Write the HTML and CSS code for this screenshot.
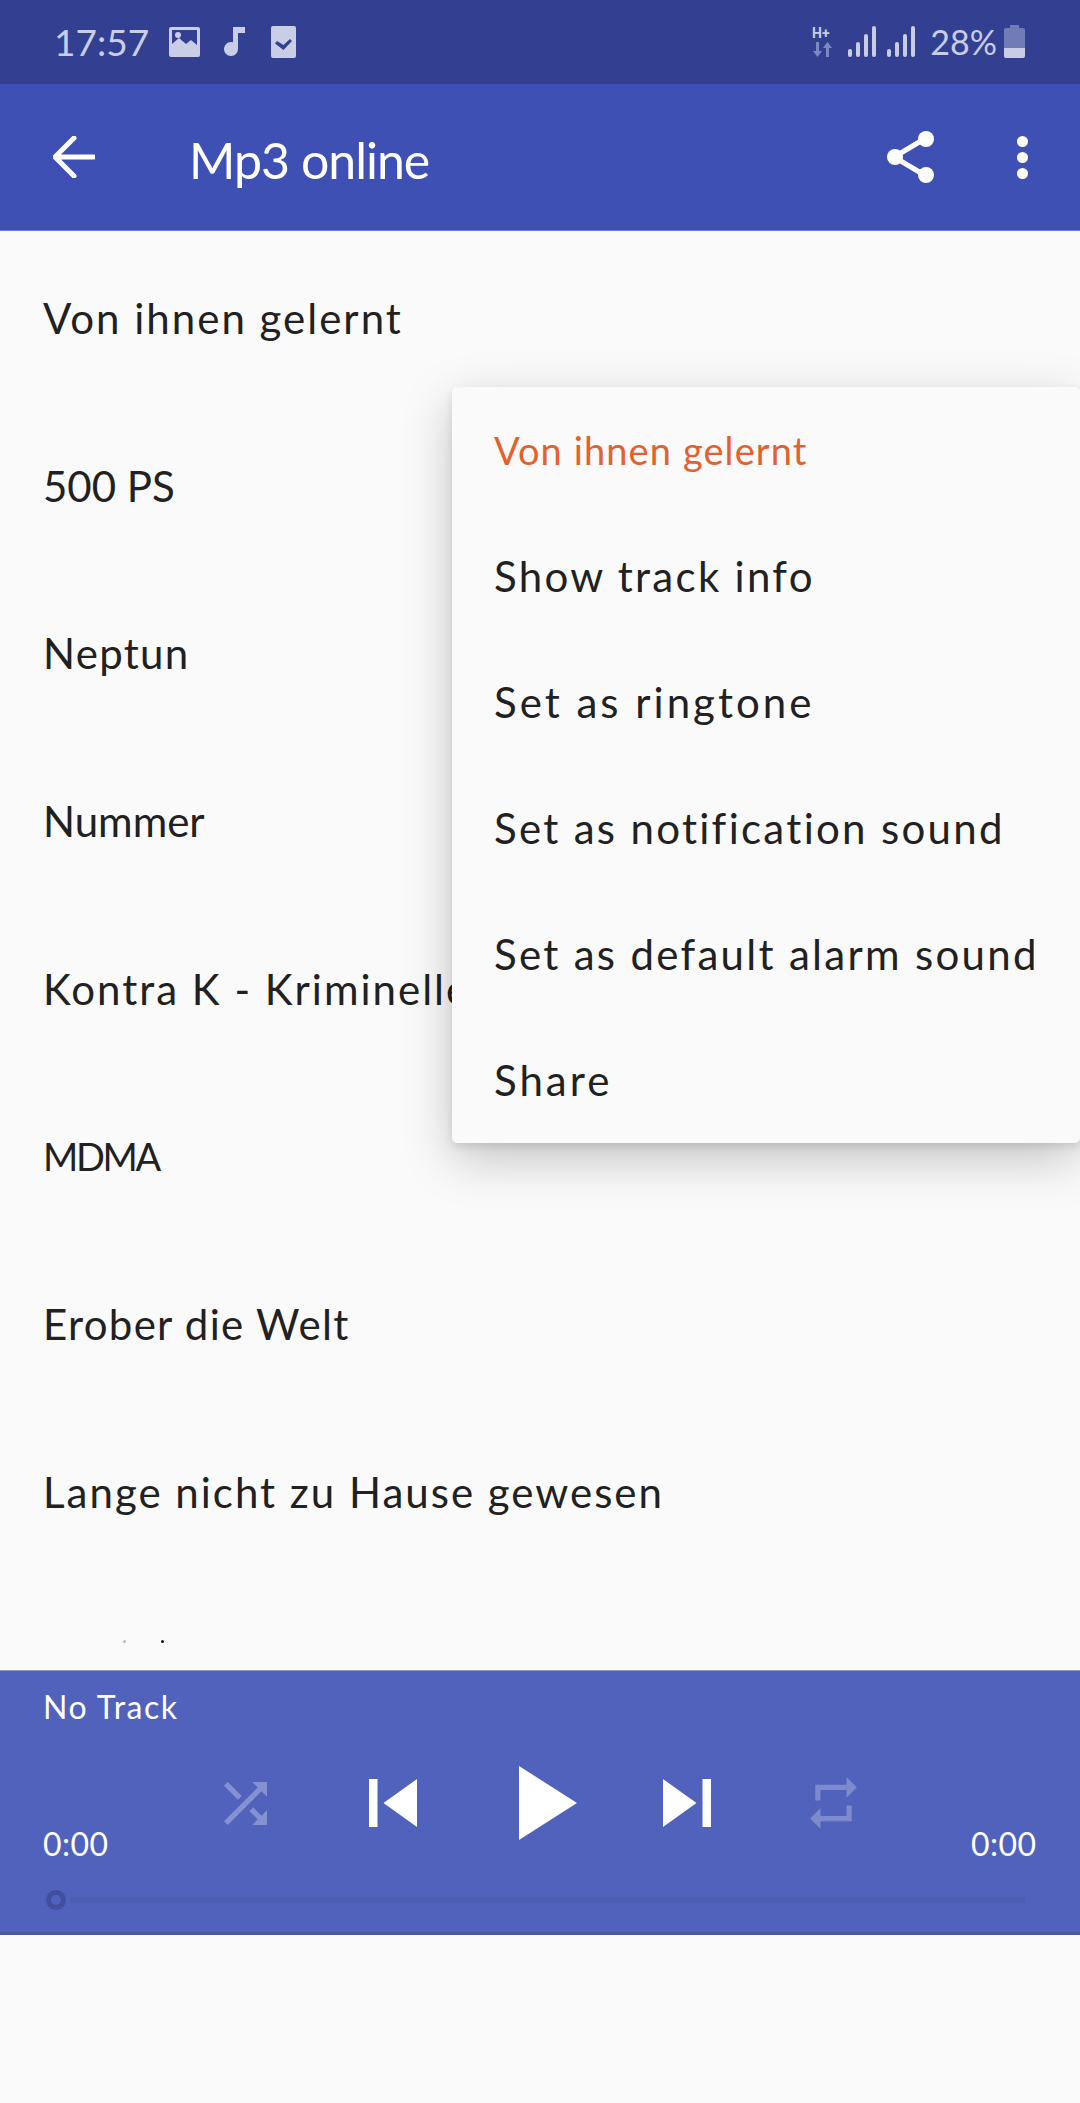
FILE: index.html
```html
<!DOCTYPE html>
<html lang="en">
<head>
<meta charset="UTF-8">
<meta name="viewport" content="width=device-width, initial-scale=1.0">
<title>Mp3 online</title>
<link rel="stylesheet" href="styles.css">
</head>
<body>
<div class="screen">
  <div class="status">
    <div class="status-left">
      <span class="clock">17:57</span>
      <svg class="st-image" viewBox="0 0 31 30"><path fill-rule="evenodd" d="M2 0h27a2 2 0 0 1 2 2v26a2 2 0 0 1-2 2H2a2 2 0 0 1-2-2V2a2 2 0 0 1 2-2zM3 3v14l7-6 7 6 5-4 6 5V3zM9 5a3 3 0 1 1 0 6 3 3 0 0 1 0-6z"/></svg>
      <svg class="st-note" viewBox="0 0 21 29"><path d="M9 0h12v6H14v16a7 7 0 1 1-5-6.700z"/></svg>
      <svg class="st-check" viewBox="0 0 25 32"><path fill-rule="evenodd" d="M2 0h21a2 2 0 0 1 2 2v28a2 2 0 0 1-2 2H2a2 2 0 0 1-2-2V2a2 2 0 0 1 2-2zM6 15l-2 2.500 8.500 6.500L21 15l-2-2-6.500 6z"/></svg>
    </div>
    <div class="status-right">
      <svg class="st-net" viewBox="0 0 23 32">
        <text x="0" y="12" class="st-net-text">H+</text>
        <path class="st-net-arrows" d="M4 16h3v9h3l-4.500 6L1 25h3zM17 31h-3v-9h-3l4.500-6 4.500 6h-3z"/>
      </svg>
      <svg class="st-signal" viewBox="0 0 28 31"><rect x="0" y="23" width="4" height="8" rx="2"/><rect x="8" y="16" width="4" height="15" rx="2"/><rect x="16" y="8" width="4" height="23" rx="2"/><rect x="24" y="0" width="4" height="31" rx="2"/></svg>
      <svg class="st-signal" viewBox="0 0 28 31"><rect x="0" y="23" width="4" height="8" rx="2"/><rect x="8" y="16" width="4" height="15" rx="2"/><rect x="16" y="8" width="4" height="23" rx="2"/><rect x="24" y="0" width="4" height="31" rx="2"/></svg>
      <span class="percent">28%</span>
      <svg class="st-battery" viewBox="0 0 21 33">
        <path class="st-battery-empty" d="M6 0h9v3h4a2 2 0 0 1 2 2v18H0V5a2 2 0 0 1 2-2h4z"/>
        <path d="M0 23h21v8a2 2 0 0 1-2 2H2a2 2 0 0 1-2-2z"/>
      </svg>
    </div>
  </div>

  <div class="appbar">
    <svg class="back" viewBox="0 0 42 42"><path d="M41 21H3M21 2 2 21l19 19"/></svg>
    <div class="appbar-title">Mp3 online</div>
    <svg class="share" viewBox="0 0 48 52">
      <path d="M39 7 7 26l32 19"/>
      <circle cx="39" cy="8" r="8"/><circle cx="8" cy="26" r="8"/><circle cx="39" cy="44" r="8"/>
    </svg>
    <svg class="more" viewBox="0 0 11 43"><circle cx="5.500" cy="5.500" r="5.500"/><circle cx="5.500" cy="21.500" r="5.500"/><circle cx="5.500" cy="37.500" r="5.500"/></svg>
  </div>

  <div class="list">
    <div class="row wide">Von ihnen gelernt</div>
    <div class="row">500 PS</div>
    <div class="row mid">Neptun</div>
    <div class="row">Nummer</div>
    <div class="row wide">Kontra K - Kriminelle</div>
    <div class="row narrow">MDMA</div>
    <div class="row mid">Erober die Welt</div>
    <div class="row wide">Lange nicht zu Hause gewesen</div>
    <div class="peek"><span class="peek-dot faint"></span><span class="peek-dot"></span></div>
  </div>

  <div class="player">
    <div class="track">No Track</div>
    <div class="player-mid">
      <span class="time">0:00</span>
      <div class="controls">
        <div class="ctl"><svg class="ic-shuffle" viewBox="4 4 16 16"><path d="M10.590 9.170 5.410 4 4 5.410l5.170 5.170 1.420-1.410zM14.500 4l2.040 2.040L4 18.590 5.410 20 17.960 7.460 20 9.500V4h-5.500zm.33 9.410-1.410 1.410 3.130 3.130L14.500 20H20v-5.500l-2.040 2.040-3.130-3.130z"/></svg></div>
        <div class="ctl"><svg class="ic-skip" viewBox="0 0 48 48"><path d="M0 0h8.500v48H0zM14.500 24 48 0v48z"/></svg></div>
        <div class="ctl"><svg class="ic-play" viewBox="0 0 58 74"><path d="M0 0l58 37L0 74z"/></svg></div>
        <div class="ctl"><svg class="ic-skip" viewBox="0 0 48 48"><path d="M39.500 0H48v48h-8.500zM33.500 24 0 0v48z"/></svg></div>
        <div class="ctl"><svg class="ic-repeat" viewBox="3 2 18 20"><path d="M7 7h10v3l4-4-4-4v3H5v6h2V7zm10 10H7v-3l-4 4 4 4v-3h12v-6h-2v4z"/></svg></div>
      </div>
      <span class="time">0:00</span>
    </div>
    <div class="slider">
      <span class="thumb"></span>
      <span class="rail"></span>
    </div>
  </div>

  <div class="menu">
    <div class="menu-item current">Von ihnen gelernt</div>
    <div class="menu-item">Show track info</div>
    <div class="menu-item roomy">Set as ringtone</div>
    <div class="menu-item">Set as notification sound</div>
    <div class="menu-item">Set as default alarm sound</div>
    <div class="menu-item roomy">Share</div>
  </div>
</div>
</body>
</html>
```

FILE: styles.css
```css
* {
  box-sizing: border-box;
}
body {
  margin: 0;
  background-color: #fafafa;
  font-family: Lato, "Open Sans", sans-serif;
  color: #212121;
}
svg {
  display: block;
  flex: none;
}
.screen {
  position: relative;
  width: 1080px;
  height: 2103px;
  overflow: hidden;
}

/* status bar */
.status {
  display: flex;
  justify-content: space-between;
  align-items: center;
  height: 84px;
  padding: 0 55px 1px 54px;
  background-color: #334092;
  color: #c9cee6;
}
.status svg {
  fill: #c9cee6;
}
.status-left, .status-right {
  display: flex;
  align-items: center;
}
.clock {
  width: 94px;
  font-size: 37px;
  line-height: 42px;
}
.st-image {
  width: 31px;
  height: 30px;
  margin-left: 21px;
}
.st-note {
  width: 21px;
  height: 29px;
  margin-left: 24px;
}
.st-check {
  width: 25px;
  height: 32px;
  margin-left: 26px;
}
.st-net {
  width: 23px;
  height: 32px;
}
.st-net-text {
  font-family: Roboto, sans-serif;
  font-size: 14px;
  font-weight: 700;
}
.status svg .st-net-arrows {
  fill: #7c88c4;
}
.st-signal {
  width: 28px;
  height: 31px;
  margin-left: 13px;
}
.st-signal + .st-signal {
  margin-left: 11px;
}
.percent {
  margin-left: 15px;
  font-size: 34px;
  line-height: 42px;
}
.st-battery {
  width: 21px;
  height: 33px;
  margin-left: 7px;
}
.status svg .st-battery-empty {
  fill: #717cb6;
}

/* app bar */
.appbar {
  display: flex;
  align-items: center;
  height: 147px;
  padding-left: 53px;
  background-color: #3e50b4;
  border-bottom: 1px solid #7182d2;
  color: #fff;
}
.back {
  width: 42px;
  height: 42px;
  fill: none;
  stroke: #fff;
  stroke-width: 5;
  stroke-linecap: round;
  stroke-linejoin: round;
}
.appbar-title {
  flex: 1;
  margin: 5px 0 0 94px;
  font-size: 50px;
  line-height: 60px;
  letter-spacing: -1px;
}
.share {
  width: 48px;
  height: 52px;
  fill: #fff;
}
.share path {
  fill: none;
  stroke: #fff;
  stroke-width: 5;
}
.more {
  width: 11px;
  height: 43px;
  margin: 0 52px 0 82px;
  fill: #fff;
}

/* song list */
.list {
  height: 1439px;
  padding-top: 3px;
  overflow: hidden;
}
.row {
  display: flex;
  align-items: center;
  height: 167.700px;
  padding-left: 43px;
  font-size: 42px;
  white-space: nowrap;
}
.row.wide {
  letter-spacing: 2px;
}
.row.mid {
  letter-spacing: 1.300px;
}
.row.narrow {
  font-size: 38px;
  letter-spacing: -2.300px;
}
.peek {
  display: flex;
  gap: 35px;
  padding: 64px 0 0 123px;
}
.peek-dot {
  width: 3px;
  height: 3px;
  border-radius: 50%;
  background-color: #111;
}
.peek-dot.faint {
  background-color: #bbb;
}

/* player */
.player {
  height: 265px;
  padding-top: 14px;
  background-color: #5062bb;
  border-top: 1px solid #8d97c6;
  border-bottom: 3px solid #4b5a9f;
  color: #fff;
}
.track {
  padding-left: 43px;
  font-size: 32px;
  line-height: 44px;
  letter-spacing: 1.500px;
}
.player-mid {
  display: flex;
  justify-content: space-between;
  height: 112px;
  margin-top: 24px;
  padding: 0 44px 0 43px;
}
.time {
  align-self: flex-end;
  width: 65px;
  font-size: 32px;
  line-height: 42px;
  letter-spacing: 0.500px;
}
.controls {
  display: flex;
  height: 100px;
}
.ctl {
  display: flex;
  justify-content: center;
  align-items: center;
  width: 147px;
}
.ic-shuffle {
  width: 43px;
  height: 43px;
  fill: #8591d1;
}
.ic-skip {
  width: 48px;
  height: 48px;
  fill: #fff;
}
.ic-play {
  width: 58px;
  height: 74px;
  margin-left: 16px;
  fill: #fff;
}
.ic-repeat {
  width: 47px;
  height: 52px;
  fill: #7d8acd;
}
.slider {
  display: flex;
  align-items: center;
  gap: 4px;
  margin-top: 25px;
  padding: 0 55px 0 46px;
}
.thumb {
  width: 20px;
  height: 20px;
  border: 5px solid #424f9f;
  border-radius: 50%;
}
.rail {
  flex: 1;
  height: 6px;
  background-color: #4d5eb0;
}

/* popup menu */
.menu {
  position: absolute;
  top: 387px;
  left: 452px;
  width: 628px;
  border-radius: 5px;
  background-color: #fafafa;
  box-shadow: 0 16px 50px rgba(0, 0, 0, 0.22), 0 4px 8px rgba(0, 0, 0, 0.1);
}
.menu-item {
  display: flex;
  align-items: center;
  height: 126px;
  padding-left: 42px;
  font-size: 42px;
  letter-spacing: 2.300px;
  white-space: nowrap;
}
.menu-item.roomy {
  letter-spacing: 3px;
}
.menu-item.current {
  font-size: 38px;
  letter-spacing: 1.100px;
  color: #e2622f;
}
```
